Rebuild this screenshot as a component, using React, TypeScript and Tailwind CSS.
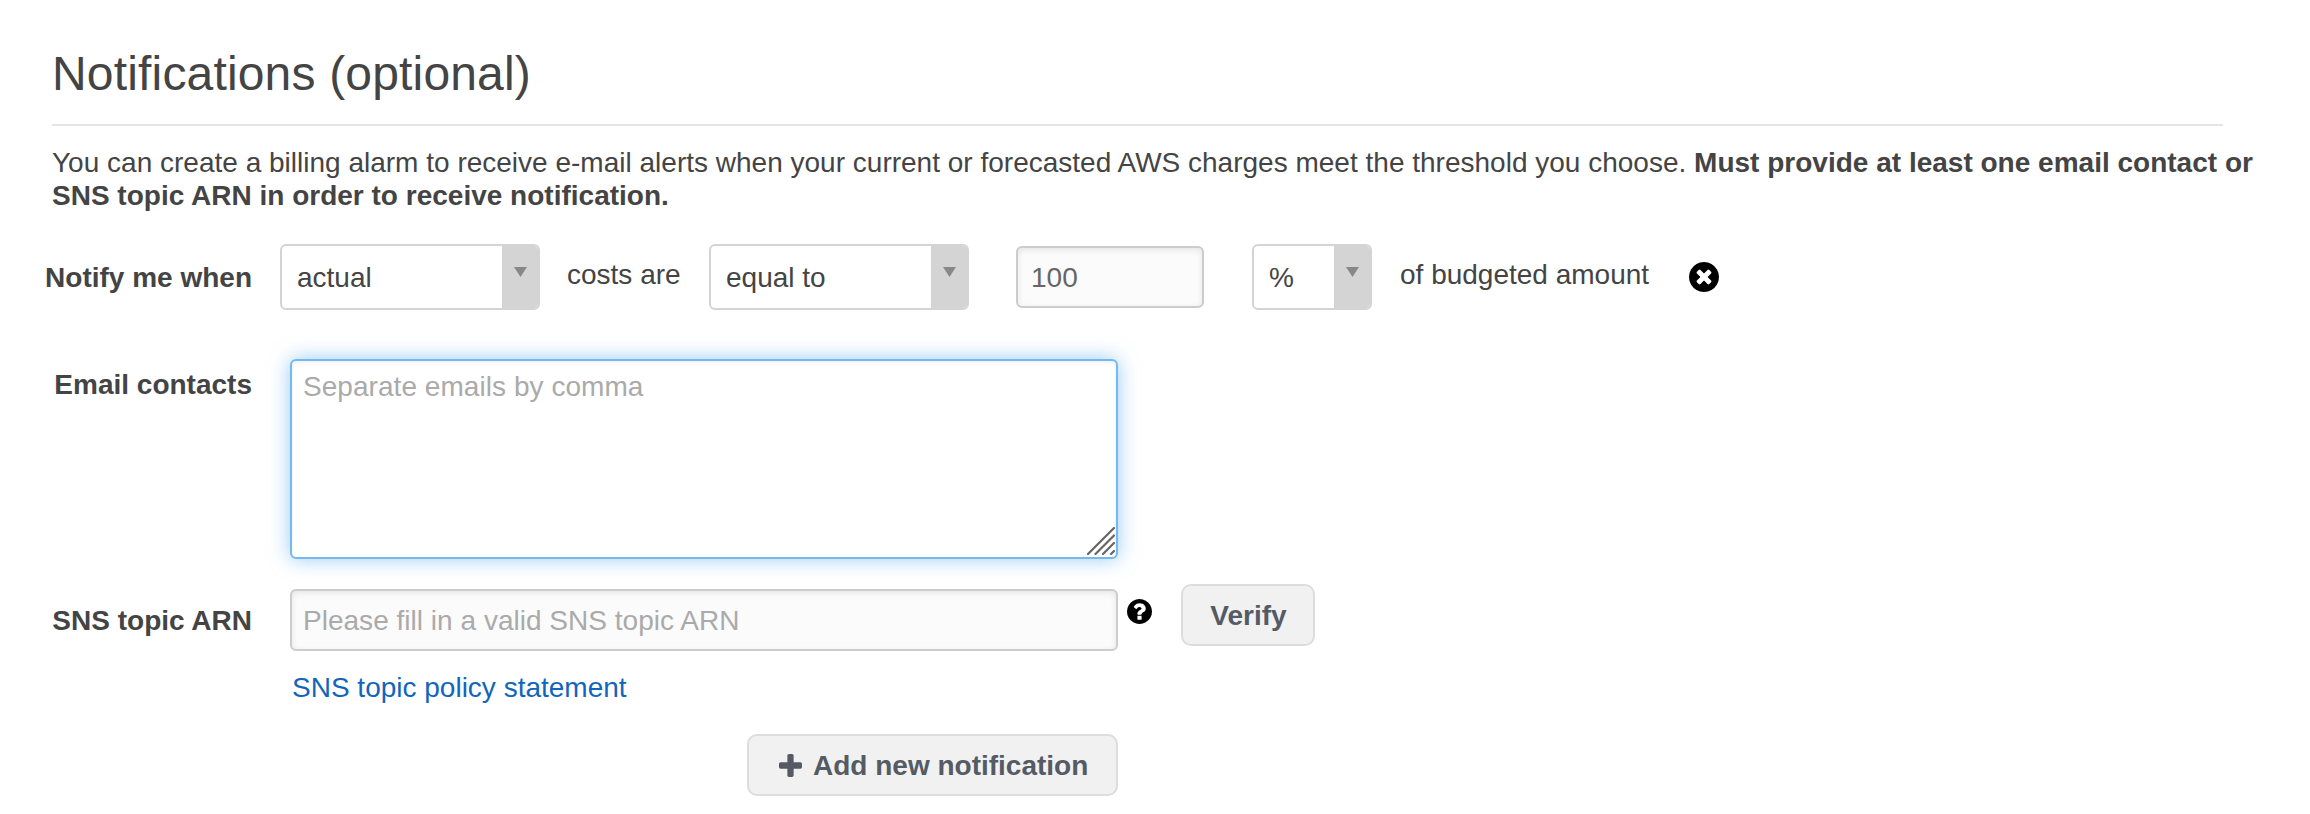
import type { ReactNode } from "react";

const CIRCLE =
  "m387-226q0 209-103 385.5t-279.5 279.5-385.5 103-385.5-103-279.5-279.5-103-385.5 103-385.5 279.5-279.5 385.5-103 385.5 103 279.5 279.5 103 385.5z";

function RemoveIcon() {
  return (
    <svg viewBox="128 128 1536 1536" className="size-[30px]" fill="currentColor">
      <path
        d={
          "M1277 1122q0-26-19-45l-181-181 181-181q19-19 19-45 0-27-19-46l-90-90q-19-19-46-19-26 0-45 19l-181 181-181-181q-19-19-45-19-27 0-46 19l-90 90q-19 19-19 46 0 26 19 45l181 181-181 181q-19 19-19 45 0 27 19 46l90 90q19 19 46 19 26 0 45-19l181-181 181 181q19 19 45 19 27 0 46-19l90-90q19-19 19-46z" +
          CIRCLE
        }
      />
    </svg>
  );
}

function HelpIcon() {
  return (
    <svg viewBox="128 128 1536 1536" className="size-[25px]" fill="currentColor">
      <path d="M1024 1376v-192q0-14-9-23t-23-9h-192q-14 0-23 9t-9 23v192q0 14 9 23t23 9h192q14 0 23-9t9-23zm256-672q0-88-55.5-163t-138.5-116-170-41q-243 0-371 213-15 24 8 42l132 100q7 6 19 6 16 0 25-12 53-68 86-92 34-24 86-24 48 0 85.5 26t37.5 59q0 38-20 61t-68 45q-63 28-115.5 86.5t-52.5 125.5v36q0 14 9 23t23 9h192q14 0 23-9t9-23q0-19 21.5-49.5t54.5-49.5q32-18 49-28.5t46-35 44.5-48 28-60.5 12.5-81zm384 192q0 209-103 385.5t-279.5 279.5-385.5 103-385.5-103-279.5-279.5-103-385.5 103-385.5 279.5-279.5 385.5-103 385.5 103 279.5 279.5 103 385.5z" />
    </svg>
  );
}

function PlusIcon() {
  return (
    <svg viewBox="192 128 1408 1408" className="size-[23px]" fill="currentColor">
      <path d="M1600 736v192q0 40-28 68t-68 28h-416v416q0 40-28 68t-68 28h-192q-40 0-68-28t-28-68v-416h-416q-40 0-68-28t-28-68v-192q0-40 28-68t68-28h416v-416q0-40 28-68t68-28h192q40 0 68 28t28 68v416h416q40 0 68 28t28 68z" />
    </svg>
  );
}

function Label({ children, className = "" }: { children: ReactNode; className?: string }) {
  return (
    <div className={`w-[252px] shrink-0 text-right font-bold whitespace-nowrap ${className}`}>
      {children}
    </div>
  );
}

function Select({ value, className }: { value: string; className: string }) {
  return (
    <div
      className={`flex h-[66px] shrink-0 overflow-hidden rounded-[6px] border-2 border-[#d4d4d4] bg-white ${className}`}
    >
      <div className="flex flex-1 items-center pl-[15px]">{value}</div>
      <div className="flex w-[36px] justify-center bg-[#d4d4d4] pt-[21px]">
        <svg viewBox="0 0 13 10" className="h-[10px] w-[13px]">
          <path d="M0 0H13L6.5 10Z" fill="#888" />
        </svg>
      </div>
    </div>
  );
}

export default function App() {
  return (
    <div className="h-[814px] w-[2310px] overflow-hidden bg-white pt-[48px] font-['Liberation_Sans',Arial,sans-serif] text-[28px] leading-[33px] text-[#444]">
      <h1 className="ml-[52px] h-[78px] w-[2171px] border-b-2 border-[#e4e4e4] text-[48px] leading-[52px] tracking-[0.17px]">
        Notifications (optional)
      </h1>
      <p className="mt-[20px] ml-[52px] w-[2220px] tracking-[0.005px]">
        You can create a billing alarm to receive e-mail alerts when your current or forecasted AWS
        charges meet the threshold you choose.{" "}
        <b>
          Must provide at least one email contact or
          <br />
          SNS topic ARN in order to receive notification.
        </b>
      </p>

      <div className="mt-[32px] flex h-[66px] items-center">
        <Label>Notify me when</Label>
        <Select value="actual" className="ml-[28px] w-[260px]" />
        <span className="ml-[27px] w-[142px] shrink-0 pb-[6px]">costs are</span>
        <Select value="equal to" className="w-[260px]" />
        <input
          defaultValue="100"
          className="ml-[47px] h-[62px] w-[188px] shrink-0 rounded-[6px] border-2 border-[#ccc] bg-[#fbfbfb] pt-[1px] pl-[13px] text-[#666] shadow-[inset_0_2px_6px_rgba(0,0,0,0.09)]"
        />
        <Select value="%" className="ml-[48px] w-[120px]" />
        <span className="ml-[28px] w-[289px] shrink-0 pb-[6px]">of budgeted amount</span>
        <span className="text-black">
          <RemoveIcon />
        </span>
      </div>

      <div className="mt-[49px] flex h-[200px]">
        <Label className="pt-[9px]">Email contacts</Label>
        <div className="relative ml-[38px] h-[200px] w-[828px]">
          <textarea
            placeholder="Separate emails by comma"
            className="block h-full w-full resize-none rounded-[6px] border-2 border-[#74b9ef] bg-white px-[11px] py-[9px] tracking-[0.05px] shadow-[inset_0_2px_4px_rgba(0,0,0,0.06),0_0_20px_rgba(82,168,236,0.6)] outline-none placeholder:text-[#aaa]"
          />
          <svg
            viewBox="0 0 28 28"
            className="absolute right-[3px] bottom-[4px] size-[28px]"
            stroke="#666"
            strokeWidth="2.2"
            strokeLinecap="round"
          >
            <path d="M1 27L27 1M8.5 27L27 8.5M16 27L27 16M24 27L27 24" />
          </svg>
        </div>
      </div>

      <div className="mt-[25px] flex h-[67px] items-start">
        <Label className="pt-[20px]">SNS topic ARN</Label>
        <input
          placeholder="Please fill in a valid SNS topic ARN"
          className="mt-[5px] ml-[38px] h-[62px] w-[828px] shrink-0 rounded-[6px] border-2 border-[#ccc] bg-[#fbfbfb] px-[11px] pt-[1px] tracking-[0.02px] shadow-[inset_0_2px_6px_rgba(0,0,0,0.09)] placeholder:text-[#aaa]"
        />
        <span className="mt-[15px] ml-[9px] text-black">
          <HelpIcon />
        </span>
        <button className="ml-[29px] h-[62px] w-[134px] rounded-[10px] border-2 border-[#ddd] bg-[#f1f1f1] pl-[1px] font-bold text-[#545b64]">
          Verify
        </button>
      </div>

      <a className="mt-[20px] ml-[292px] block w-fit text-[#1166bb]">SNS topic policy statement</a>

      <button className="mt-[30px] ml-[747px] flex h-[62px] w-[371px] items-center rounded-[10px] border-2 border-[#ddd] bg-[#f1f1f1] pl-[30px] font-bold whitespace-nowrap text-[#545b64]">
        <PlusIcon />
        <span className="ml-[11px]">Add new notification</span>
      </button>
    </div>
  );
}
